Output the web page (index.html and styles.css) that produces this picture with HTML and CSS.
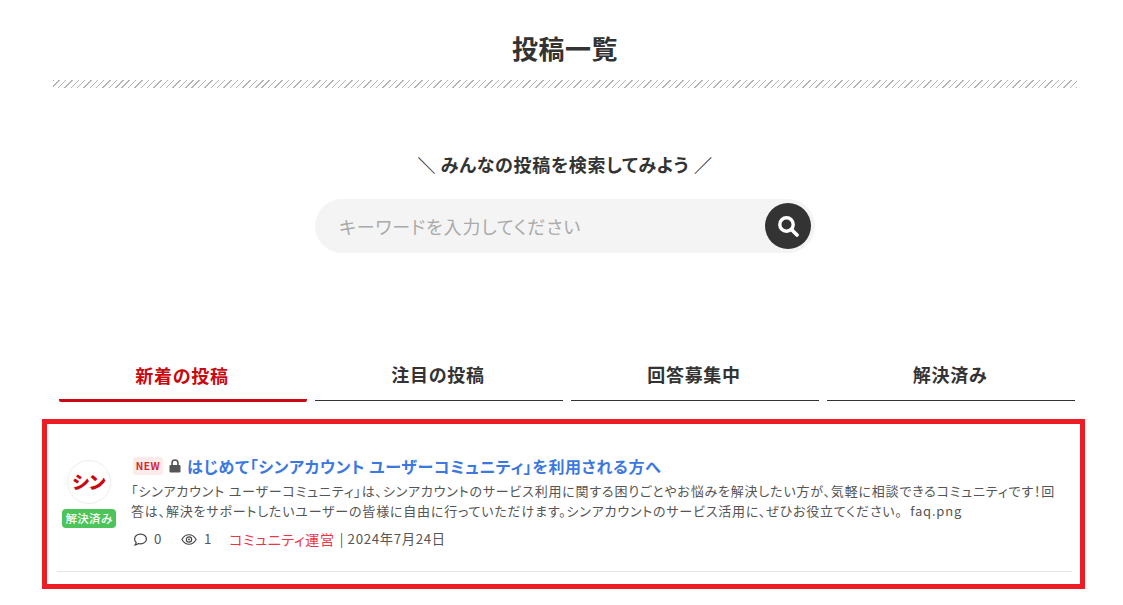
FILE: index.html
```html
<!DOCTYPE html>
<html lang="ja">
<head>
<meta charset="utf-8">
<title>投稿一覧</title>
<link rel="stylesheet" href="styles.css">
</head>
<body>
<main class="page">
  <header class="head">
    <h1 class="title">投稿一覧</h1>
    <div class="hatch"></div>
  </header>
  <section class="search">
    <p class="search-lead">＼ みんなの投稿を検索してみよう ／</p>
    <form class="search-box">
      <span class="placeholder">キーワードを入力してください</span>
      <span class="search-btn">
        <svg viewBox="0 0 24 24" width="24" height="24"><circle cx="10.5" cy="10.500" r="6.700" fill="none" stroke="#fff" stroke-width="3.400"/><path d="M15.500 15.500 21 21" stroke="#fff" stroke-width="3.800" stroke-linecap="round"/></svg>
      </span>
    </form>
  </section>
  <nav class="tabs">
    <a class="tab is-active">新着の投稿</a>
    <a class="tab">注目の投稿</a>
    <a class="tab">回答募集中</a>
    <a class="tab">解決済み</a>
  </nav>
  <section class="list">
    <article class="post">
      <div class="author">
        <div class="avatar">シン</div>
        <span class="solved">解決済み</span>
      </div>
      <div class="body">
        <h2 class="post-title">
          <span class="new">NEW</span>
          <svg class="lock" viewBox="0 0 12 14" width="12" height="14"><path d="M3 6V4a3 3 0 0 1 6 0v2" fill="none" stroke="#555" stroke-width="1.600"/><rect x="0.500" y="6" width="11" height="7.500" rx="1.200" fill="#555"/></svg>
          <a class="post-link">はじめて「シンアカウント ユーザーコミュニティ」を利用される方へ</a>
        </h2>
        <p class="excerpt">「シンアカウント ユーザーコミュニティ」は、シンアカウントのサービス利用に関する困りごとやお悩みを解決したい方が、気軽に相談できるコミュニティです！回答は、解決をサポートしたいユーザーの皆様に自由に行っていただけます。シンアカウントのサービス活用に、ぜひお役立てください。&nbsp; faq.png</p>
        <div class="meta">
          <span class="stat"><svg viewBox="0 0 16 16" width="15" height="15"><path d="M8 2.200c3.600 0 6.300 2.300 6.300 5.200S11.600 12.600 8 12.600c-.8 0-1.500-.1-2.200-.3-.9.8-2.200 1.400-3.600 1.500.7-.8 1.100-1.700 1.200-2.600C2.400 10.200 1.700 8.900 1.700 7.400c0-2.900 2.700-5.200 6.300-5.200z" fill="none" stroke="#444" stroke-width="1.300"/></svg>0</span>
          <span class="stat stat-views"><svg viewBox="0 0 18 14" width="16" height="13"><path d="M1 7c2-3.500 4.800-5.300 8-5.300S15 3.500 17 7c-2 3.500-4.800 5.300-8 5.300S3 10.500 1 7z" fill="none" stroke="#444" stroke-width="1.300"/><circle cx="9" cy="7" r="3" fill="none" stroke="#444" stroke-width="1.300"/><circle cx="9" cy="7" r="1" fill="#444"/></svg>1</span>
          <a class="cat">コミュニティ運営</a>
          <span class="date">| 2024年7月24日</span>
        </div>
      </div>
    </article>
  </section>
</main>
</body>
</html>
```
FILE: styles.css
```css
* { box-sizing: border-box; }
html, body { margin: 0; padding: 0; background: #fff; }
body {
  height: 605px;
  overflow: hidden;
  color: #333;
  font-family: "Noto Sans CJK JP", "Noto Sans", sans-serif;
  font-feature-settings: "palt";
}
.page { display: flex; flex-direction: column; }
.head { padding: 28px 46px 0 53px; text-align: center; }
.title {
  margin: 0;
  font-size: 26px;
  line-height: 40px;
  font-weight: 700;
  color: #333;
  letter-spacing: 0.02em;
}
.hatch {
  height: 8px;
  margin-top: 12px;
  background: repeating-linear-gradient(-45deg, #b4b4b4 0 1px, #fff 1px 4.5px);
}
.search { display: flex; flex-direction: column; align-items: center; padding-top: 64px; }
.search-lead {
  margin: 0 0 0 7px;
  font-size: 18px;
  line-height: 24px;
  font-weight: 700;
  letter-spacing: 0.037em;
}
.search-box {
  display: flex;
  align-items: center;
  justify-content: space-between;
  width: 500px;
  height: 54px;
  margin: 23px 0 0 7px;
  padding: 0 4px 0 24px;
  background: #f4f4f4;
  border-radius: 27px;
}
.placeholder { font-size: 18px; color: #aaa; letter-spacing: 0.05em; }
.search-btn {
  display: flex;
  align-items: center;
  justify-content: center;
  width: 46px;
  height: 46px;
  border-radius: 50%;
  background: #333;
}
.tabs {
  display: grid;
  grid-template-columns: repeat(4, 248px);
  gap: 8px;
  margin: 93px 0 0 59px;
}
.tab {
  display: block;
  height: 55px;
  padding: 15px 2px 0 0;
  text-align: center;
  font-size: 18px;
  line-height: 26px;
  font-weight: 700;
  letter-spacing: 0.04em;
  border-bottom: 1.500px solid #333;
  color: #333;
}
.tab.is-active {
  padding-top: 16px;
  height: 56px;
  color: #c9090f;
  border-bottom: 3px solid #c9090f;
  border-radius: 0 0 2px 2px;
}
.list {
  height: 170px;
  margin: 17px 38px 0 42px;
  padding: 0 8px 0 10px;
  border: 5px solid #ee1c25;
}
.post {
  display: flex;
  height: 148px;
  padding: 31px 0 0 5px;
  border-bottom: 1px solid #e5e5e5;
}
.author { display: flex; flex-direction: column; align-items: center; width: 54px; flex: none; }
.avatar {
  width: 44px;
  height: 44px;
  border: 1px solid #eee;
  border-radius: 50%;
  color: #c9090f;
  font-size: 18px;
  font-weight: 900;
  line-height: 40px;
  text-align: center;
  margin-top: 5px;
}
.solved {
  margin-top: 5px;
  width: 54px;
  height: 19px;
  background: #4cc45a;
  border-radius: 4px;
  color: #fff;
  font-size: 11.500px;
  line-height: 19px;
  letter-spacing: 0.03em;
  font-weight: 500;
  text-align: center;
  white-space: nowrap;
}
.body { margin-left: 15px; flex: 1; min-width: 0; }
.post-title {
  display: flex;
  align-items: center;
  margin: 0;
  height: 22px;
  font-size: 16px;
  font-weight: 700;
  line-height: 22px;
  letter-spacing: 0.04em;
}
.new {
  width: 30px;
  height: 18px;
  margin: 0 6px 0 2px;
  background: #fdeaea;
  border-radius: 3px;
  color: #d0272c;
  font-size: 10px;
  font-weight: 700;
  line-height: 18px;
  text-align: center;
  letter-spacing: 0.05em;
}
.lock { margin-right: 6px; }
.post-link { color: #3b78e0; }
.excerpt {
  margin: 4px 0 0;
  padding-right: 8px;
  font-size: 13px;
  line-height: 20px;
  color: #555;
  letter-spacing: 0.062em;
}
.meta {
  display: flex;
  align-items: center;
  margin: 8px 0 0 2px;
  font-size: 13.300px;
  line-height: 20px;
  color: #555;
  letter-spacing: 0.05em;
}
.stat { display: flex; align-items: center; gap: 6px; }
.stat-views { margin-left: 19px; gap: 7px; }
.cat { margin-left: 17px; color: #ee3344; font-size: 14px; }
.date { margin-left: 5px; }
```
